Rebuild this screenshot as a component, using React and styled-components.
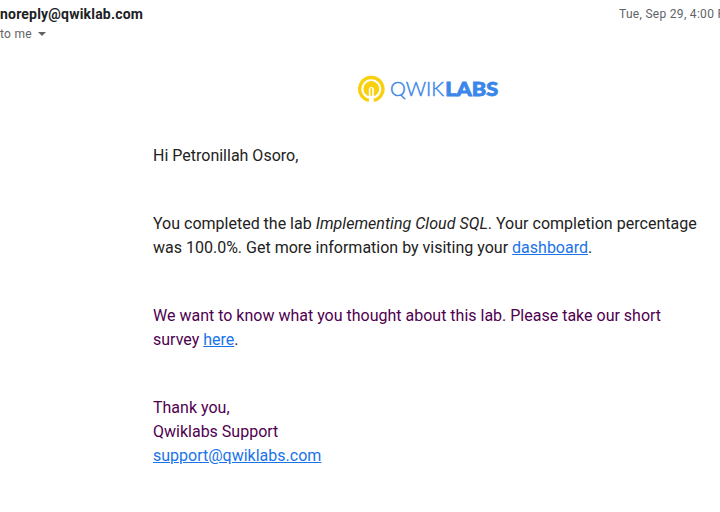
import React from "react";
import styled, { createGlobalStyle } from "styled-components";

const Global = createGlobalStyle`
  body { margin: 0; background: #fff; overflow: hidden; }
`;
const Page = styled.main`
  width: 720px; height: 512px; overflow: hidden; background: #fff;
  font-family: Roboto, sans-serif; color: #202124;
`;
const Header = styled.header`
  display: flex; justify-content: space-between; height: 28px;
  padding-top: 4px; white-space: nowrap;
`;
const Sender = styled.strong`
  font-size: 14px; line-height: 20px; font-weight: 700; letter-spacing: 0.2px;
`;
const Stamp = styled.time`
  flex: none; width: 101px; overflow: hidden;
  font-size: 12px; line-height: 20px; letter-spacing: 0.3px; color: #5f6368;
`;
const Recipient = styled.div`
  display: flex; align-items: center; gap: 6px; height: 20px; margin-top: -8px;
  font-size: 12px; letter-spacing: 0.3px; color: #5f6368;
`;
const Caret = styled.svg`width: 8px; height: 4px;`;
const LogoRow = styled.div`
  display: flex; align-items: center; padding: 31px 0 0 358px;
`;
const Logo = styled.svg`width: 142px; height: 28px;`;
const Wordmark = styled.text`
  font-family: Lato, sans-serif;
  font-size: 19.5px;
  font-weight: ${(p) => (p.$heavy ? 900 : 300)};
  fill: #3b86ea;
  stroke: #3b86ea;
  stroke-width: ${(p) => (p.$heavy ? "0.8px" : "0.45px")};
`;
const Body = styled.article`
  padding: 41px 0 0 153px; font-size: 16px; line-height: 24px;
`;
const Paragraph = styled.p`
  margin: 0 0 44px; white-space: nowrap;
  color: ${(p) => (p.$quoted ? "#500050" : "#222222")};
`;
const LabName = styled.em`letter-spacing: 0.04px;`;
const Completion = styled.span`letter-spacing: 0.02px;`;
const Link = styled.a`color: #1a73e8; text-decoration: underline;`;

export default function App() {
  return (
    <Page>
      <Global />
      <Header>
        <Sender>noreply@qwiklab.com</Sender>
        <Stamp>Tue, Sep 29, 4:00 PM</Stamp>
      </Header>
      <Recipient>
        to me
        <Caret viewBox="0 0 8 4"><path d="M0 0h8L4 4z" fill="#5f6368" /></Caret>
      </Recipient>
      <LogoRow>
        <Logo viewBox="0 0 142 28">
          <path d="M10.9 25.4A11.6 11.6 0 1 1 15.7 25.4" fill="none" stroke="#f8d010" strokeWidth="3.4" />
          <path d="M10.8 21.3A7.8 7.8 0 1 1 15.8 21.3V14.4A2.5 2.5 0 0 0 10.8 14.4Z" fill="#f8d010" />
          <path d="M13.3 14v6" fill="none" stroke="#f8d010" strokeWidth="1.8" strokeLinecap="round" />
          <Wordmark x="32" y="20.6" textLength="54" lengthAdjust="spacingAndGlyphs">QWIK</Wordmark>
          <Wordmark $heavy x="87.2" y="20.6" textLength="53" lengthAdjust="spacingAndGlyphs">LABS</Wordmark>
        </Logo>
      </LogoRow>
      <Body>
        <Paragraph>Hi Petronillah Osoro,</Paragraph>
        <Paragraph>
          You completed the lab <LabName>Implementing Cloud SQL</LabName>. <Completion>Your completion percentage</Completion><br />
          was 100.0%. Get more information by visiting your <Link href="#">dashboard</Link>.
        </Paragraph>
        <Paragraph $quoted>
          We want to know what you thought about this lab. Please take our short<br />
          survey <Link href="#">here</Link>.
        </Paragraph>
        <Paragraph $quoted>
          Thank you,<br />Qwiklabs Support<br /><Link href="#">support@qwiklabs.com</Link>
        </Paragraph>
      </Body>
    </Page>
  );
}
